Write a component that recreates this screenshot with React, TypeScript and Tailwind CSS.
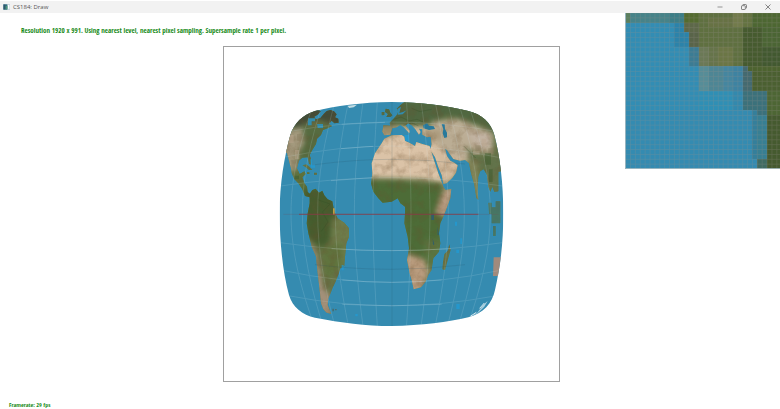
import React from "react";

const GLOBE =
  "M530 186C440 187 360 198 300 213C262 226 238 248 226 285C208 350 194 430 194 520C194 610 204 700 222 765C232 800 262 826 300 833C380 848 450 858 530 858C620 857 700 846 760 832C805 820 832 790 840 750C856 680 865 610 865 520C865 430 855 350 838 285C828 248 800 222 760 213C690 196 620 187 530 186Z";

const LAND = [
  // North and Central America
  "M280 200L318 214 308 224 298 230 302 238 316 234 326 222 335 213 346 210 357 214 365 223 360 232 370 236 371 248 358 250 350 242 342 252 352 258 335 266 324 270 318 285 306 296 303 312 292 330 284 345 289 360 288 374 282 372 278 352 262 353 252 362 246 385 254 402 268 394 272 402 262 412 268 430 276 440 278 456 290 466 284 472 270 468 262 448 250 430 238 418 230 400 228 385 222 362 216 338 190 335 190 200Z",
  // Caribbean islands
  "M262 376L274 373 284 381 292 390 282 390 272 382ZM297 398h9v6h-9ZM276 397h7v5h-7Z",
  // South America
  "M284 462L292 450 302 446 312 458 322 452 328 466 338 478 352 484 358 515 368 535 388 548 402 565 402 590 394 610 390 650 388 678 376 685 370 705 362 725 354 742 346 762 340 775 338 795 345 812 349 822 335 818 325 808 318 790 314 750 308 700 303 650 290 620 280 580 275 550 278 520 284 490Z",
  // Africa
  "M508 296L530 286 560 285 568 290 570 302 590 312 600 318 604 306 622 312 644 318 652 345 662 375 670 400 680 425 686 442 692 450 709 446 706 475 695 505 685 530 676 550 672 580 676 610 672 635 655 655 650 690 640 705 632 725 618 742 596 748 590 720 584 700 576 660 582 625 578 590 568 550 570 520 570 500 556 490 548 475 530 485 503 488 490 475 475 455 468 430 472 400 470 370 480 340 500 310Z",
  // Madagascar
  "M703 613L707 630 697 665 690 691 682 688 684 665 688 642 698 632Z",
  // Iberia, Europe, Arabia and Asia
  "M505 256L526 257 524 248 534 238 545 226 550 214 545 206 556 196 575 180 870 180 870 392 850 395 850 454 838 455 832 440 826 455 820 440 816 405 806 388 796 394 790 410 788 450 790 480 784 474 778 434 768 400 762 370 750 360 735 362 715 357 704 342 696 330 690 326 696 348 706 362 718 368 728 376 723 398 712 414 695 430 685 432 680 405 670 382 660 352 646 330 650 312 647 290 636 292 622 284 622 268 612 266 617 276 612 284 601 268 590 256 580 250 572 256 584 272 583 280 566 262 556 255 545 262 532 265 526 284 508 286 502 275Z",
  // British Isles
  "M512 206L522 208 526 218 532 226 526 231 514 231 519 222 510 216ZM500 216L508 216 508 225 500 226Z",
  // Indochina and Indonesia
  "M820 488h10v14h12v-18h14v66h-26v-28h-8ZM834 558h8v30h-8Z",
].join("");

// Longitude lines, given by where they cross the equator
const MERIDIANS = [228, 262, 308, 361, 418, 474, 588, 645, 700, 748, 790, 826];

function Globe() {
  return (
    <svg viewBox="27 21 1005 1002" className="block size-full" role="img" aria-label="Warped world map">
      <defs>
        <clipPath id="globe">
          <path d={GLOBE} />
        </clipPath>
        <clipPath id="land">
          <path d={LAND} />
        </clipPath>
        <filter id="soft" x="-30%" y="-30%" width="160%" height="160%" colorInterpolationFilters="sRGB">
          <feGaussianBlur stdDeviation="8" />
        </filter>
        <filter id="terrain" x="0" y="0" width="100%" height="100%" colorInterpolationFilters="sRGB">
          <feTurbulence type="fractalNoise" baseFrequency="0.035" numOctaves="4" seed="8" />
          <feColorMatrix values="0 0 0 0 0.42  0 0 0 0 0.31  0 0 0 0 0.18  2 0 0 0 -0.85" />
        </filter>
      </defs>
      <g clipPath="url(#globe)">
        <rect x="180" y="170" width="700" height="700" fill="#358bb0" />
        <path d={LAND} fill="none" stroke="#2993c4" strokeWidth="5" opacity=".5" />
        <g clipPath="url(#land)">
          <rect x="180" y="170" width="700" height="700" fill="#667447" />
          <g filter="url(#soft)">
            {/* Americas */}
            <path d="M190 190H390V262L300 238 240 265Z" fill="#424c38" />
            <path d="M262 260L350 255 290 350 255 370Z" fill="#566b40" />
            <path d="M190 280L262 262 268 310 245 345 250 390 200 400Z" fill="#a3997d" />
            <path d="M235 390H300V475H250Z" fill="#5c713c" />
            <path d="M265 445H355L365 530 350 600 320 625 275 590Z" fill="#455d2e" />
            <path d="M350 535H415V620L380 690 340 680 345 610Z" fill="#6e7c4a" />
            <path d="M320 620L385 610 380 680 330 720Z" fill="#60743e" />
            <path d="M270 590L300 630 314 680 324 740 352 775 350 825 300 830 295 680Z" fill="#a39079" />
            {/* Africa and Arabia */}
            <path d="M440 260H665L700 430 660 424 620 416 450 412Z" fill="#dbc3a7" />
            <path d="M642 285L760 345 740 390 690 440Z" fill="#d3bb9e" />
            <path d="M440 424H550L620 434 678 430 670 480 680 535 680 600 640 660 575 635 560 500 490 510Z" fill="#4d6c37" />
            <path d="M690 445H720L695 530 660 520 672 485Z" fill="#b89b80" />
            <path d="M565 640L620 655 645 680 620 760 575 755Z" fill="#b99c7e" />
            <path d="M625 600L690 600 670 650 635 690Z" fill="#5a7540" />
            {/* Europe and Asia */}
            <path d="M495 180H870V300L800 255 700 225 640 250 500 255Z" fill="#506740" />
            <path d="M495 255H540V290H495Z" fill="#9a8c68" />
            <path d="M650 245L730 236 835 280 830 342 765 332 760 365 700 345 650 300Z" fill="#bbad94" />
            <path d="M618 270H680V300H618Z" fill="#ab9a7c" />
            <path d="M750 275L820 280 835 320 790 325Z" fill="#c2b3a2" />
            <path d="M750 315L790 350 835 355 860 310V470H820L805 385 790 385 770 360Z" fill="#62734a" />
            <path d="M760 362H788L790 480H775Z" fill="#85885c" />
          </g>
          <rect x="180" y="170" width="700" height="700" filter="url(#terrain)" opacity=".35" />
          <g fill="none" stroke="#344f27" strokeWidth="3" opacity=".3">
            <path d="M536 238L558 231 582 243 606 238 625 246M565 256L590 249 610 257M746 318L782 354M590 205L615 215 650 208" />
            <path d="M310 480L345 492 322 516 339 546 319 574" />
          </g>
          {/* Coarse texels close to the edges */}
          <g opacity=".5">
            <path d="M220 285h16v24h-16ZM240 330h13v28h-13ZM800 296h14v22h-14ZM774 332h20v12h-20Z" fill="#b9a68d" />
            <path d="M246 282h15v20h-15ZM229 360h12v26h-12ZM781 316h16v18h-16ZM820 325h15v18h-15Z" fill="#8a8062" />
            <path d="M810 340h18v34h-18ZM822 388h11v38h-11ZM238 407h14v11h-14Z" fill="#3d5b2d" />
            <path d="M822 484h34v104h-34Z" fill="#287b83" />
          </g>
        </g>
        {/* Inland seas, lakes and shallow water */}
        <path d="M624 256L636 250 642 257 656 259 660 267 642 270 626 265ZM680 252L689 253 690 267 696 278 696 292 688 294 683 280 685 268Z" fill="#28799b" />
        <path d="M280 235H300V244H290V256H278ZM306 252H324V264H308ZM547 207L558 200 553 219 564 216 575 211 563 223 548 224Z" fill="#328cad" />
        <path d="M649 523h8v17h-8ZM653 595l5 18 -4 2ZM667 560l5 25 -4 0Z" fill="#315e69" />
        <path d="M286 358h5v18h9v7h-12ZM720 545h6v12h-6ZM736 595h5v17h-5ZM724 629h8v10h-8ZM724 792h10v15h-10ZM421 822h7v7h-7ZM568 285h14v19h-10ZM380 675h6v16h-6Z" fill="#209dd8" opacity=".7" />
        <path d="M354 505h5v20h-5Z" fill="#c19b42" />
        <path d="M836 652H860V708H834Z" fill="#a08a7c" />
        <path d="M352 806h5v8h-5ZM360 807h5v4h-5Z" fill="#496d6f" />
        <path d="M398 197L426 194 416 202 402 204Z" fill="#c2dce3" />
        <path d="M758 834L787 818 804 795 818 783 808 800 788 820Z" fill="#a9cfde" />
        <path d="M766 829L784 817M794 805L808 789" stroke="#d8e9f0" strokeWidth="3" fill="none" />
        {/* Graticule */}
        <g fill="none" stroke="#d8eef5" strokeWidth="3" opacity=".14">
          {MERIDIANS.map((x) => {
            const end = 530 + (x - 530) * 0.76;
            return <path key={x} d={`M${end} 180C${x - (x - 530) * 0.09} 300 ${x} 410 ${x} 520S${x - (x - 530) * 0.09} 740 ${end} 865`} />;
          })}
          <path d="M220 275Q375 246 530 246T850 275M206 352Q370 318 530 318T850 352M196 438Q360 413 530 413T862 438" />
          <path d="M196 608Q360 632 530 632T862 608M206 692Q370 727 530 727T850 692M225 768Q375 797 530 797T840 768" />
        </g>
        <g fill="none" stroke="#e2f1f6" strokeWidth="3" opacity=".2">
          <path d="M378 326L474 319M348 422L472 413M350 626Q520 638 708 626M382 720Q530 734 680 720M382 793Q530 802 680 793M380 253L510 247" />
        </g>
        <g fill="none" stroke="#264b60" strokeWidth="3" opacity=".16">
          <path d="M531 186V858M300 374Q420 358 530 358T750 372M300 674Q420 688 530 688T750 674" />
        </g>
        <path d="M252 523H790" stroke="#8f3844" strokeWidth="4" opacity=".6" />
        <path d="M205 523H850" stroke="#7b4352" strokeWidth="3" opacity=".2" />
      </g>
    </svg>
  );
}

// Magnified pixels: x, y, width, height, colour
const TEXELS: [number, number, number, number, string][] = [
  [17, 38, 14, 29, "#5a7f5e"],
  [31, 38, 132, 29, "#468389"],
  [148, 38, 44, 29, "#3c7e87"],
  [192, 38, 44, 29, "#546b30"],
  [163, 67, 29, 73, "#2b83aa"],
  [192, 67, 44, 29, "#5d6849"],
  [192, 96, 15, 44, "#2b83aa"],
  [207, 96, 29, 44, "#596449"],
  [207, 140, 29, 58, "#3b7c94"],
  [236, 38, 244, 160, "#5f7040"],
  [265, 52, 74, 29, "#677244"],
  [339, 38, 29, 43, "#727b4b"],
  [368, 38, 29, 43, "#647341"],
  [397, 38, 83, 43, "#4d6732"],
  [368, 81, 59, 59, "#465b2f"],
  [427, 81, 53, 59, "#4b6534"],
  [236, 140, 30, 58, "#6b7956"],
  [266, 140, 29, 58, "#66744a"],
  [295, 140, 44, 58, "#6b7645"],
  [368, 140, 112, 58, "#465b2f"],
  [427, 140, 53, 73, "#425930"],
  [236, 198, 30, 73, "#568d98"],
  [266, 198, 44, 73, "#4d8695"],
  [310, 198, 29, 73, "#4486a0"],
  [339, 198, 29, 73, "#3d83a2"],
  [368, 198, 29, 73, "#446a70"],
  [383, 198, 97, 15, "#4d632f"],
  [397, 213, 83, 58, "#4b6031"],
  [236, 271, 103, 59, "#2f8fb5"],
  [339, 271, 29, 59, "#3289ae"],
  [368, 271, 73, 59, "#3b717b"],
  [412, 330, 29, 15, "#3a717c"],
  [397, 330, 15, 146, "#347f9b"],
  [412, 345, 29, 131, "#377f93"],
  [412, 476, 29, 29, "#3f6b62"],
  [441, 271, 39, 74, "#4d6634"],
  [441, 345, 39, 160, "#455a2f"],
];

const GRID_STEPS = Array.from({ length: 33 }, (_, i) => i);

function PixelInspector() {
  return (
    <svg viewBox="15 38 465 468" className="block h-[156px] w-[155px]" role="img" aria-label="Magnified pixels">
      <rect x="15" y="38" width="465" height="468" fill="#348bb1" />
      <path d="M17 67H163V140H207V198H236V330H17Z" fill="#328db4" />
      <g shapeRendering="crispEdges">
        {TEXELS.map(([x, y, w, h, fill]) => (
          <rect key={`${x}-${y}-${w}`} x={x} y={y} width={w} height={h} fill={fill} />
        ))}
      </g>
      <g stroke="#95908a" strokeWidth="2" opacity=".34">
        {GRID_STEPS.map((i) => (
          <React.Fragment key={i}>
            <path d={`M${17 + i * 14.63} 38V506`} />
            <path d={`M15 ${38 + i * 14.63}H480`} />
          </React.Fragment>
        ))}
      </g>
      <path d="M16 38V505H480" fill="none" stroke="#a7bcc3" strokeWidth="3" />
    </svg>
  );
}

export default function App() {
  return (
    <div className="flex min-h-screen flex-col bg-white font-['Open_Sans_Condensed','Liberation_Sans_Narrow','Liberation_Sans',sans-serif]">
      <header className="flex h-[13px] items-center justify-between border-t border-white bg-[#f2f2f2] pl-[3px]">
        <div className="flex items-center gap-[3px]">
          <svg viewBox="0 0 21 18" className="h-[6px] w-[7px]" aria-hidden="true">
            <path d="M0 0H21V18H0Z" fill="#c9d8df" />
            <path d="M1 1H13V17H1Z" fill="#326d81" />
            <path d="M2 2H7V16H2Z" fill="#31576b" />
            <path d="M8 6H13V16H8Z" fill="#4d9779" />
            <path d="M15 3H19V14H15Z" fill="#fff" />
          </svg>
          <h1 className="font-['Open_Sans','Noto_Sans',sans-serif] text-[6px] leading-[12px] text-[#555]">CS184: Draw</h1>
        </div>
        <div className="flex h-full text-[#555]">
          <button type="button" aria-label="Minimize" className="grid w-6 place-items-center">
            <svg viewBox="0 0 6 6" className="size-[6px]" fill="none" stroke="currentColor" strokeWidth=".6">
              <path d="M.5 3H5.5" />
            </svg>
          </button>
          <button type="button" aria-label="Restore" className="grid w-6 place-items-center">
            <svg viewBox="0 0 6 6" className="size-[6px]" fill="none" stroke="currentColor" strokeWidth=".7">
              <rect x=".5" y="1.7" width="3.8" height="3.8" rx=".6" />
              <path d="M1.7 1.2Q1.7.5 2.4.5H4.6Q5.5.5 5.5 1.4V3.6Q5.5 4.3 4.8 4.3" />
            </svg>
          </button>
          <button type="button" aria-label="Close" className="grid w-6 place-items-center">
            <svg viewBox="0 0 6 6" className="size-[6px]" fill="none" stroke="currentColor" strokeWidth=".7">
              <path d="M.5.5L5.5 5.5M5.5.5L.5 5.5" />
            </svg>
          </button>
        </div>
      </header>
      <main className="grid flex-1 grid-cols-[1fr_337px_1fr] pl-[3px]">
        <div className="flex min-w-0 flex-col justify-between whitespace-nowrap font-bold text-[#168a16]">
          <p className="pt-3 pl-[18px] text-[7px] leading-[12px]">
            Resolution 1920 x 991. Using nearest level, nearest pixel sampling. Supersample rate 1 per pixel.
          </p>
          <p className="pl-[6px] text-[6px] leading-[8px]">Framerate: 29 fps</p>
        </div>
        <div className="pt-[33px]">
          <div className="h-[336px] border border-[#a0a0a0]">
            <Globe />
          </div>
        </div>
        <div className="justify-self-end">
          <PixelInspector />
        </div>
      </main>
    </div>
  );
}
